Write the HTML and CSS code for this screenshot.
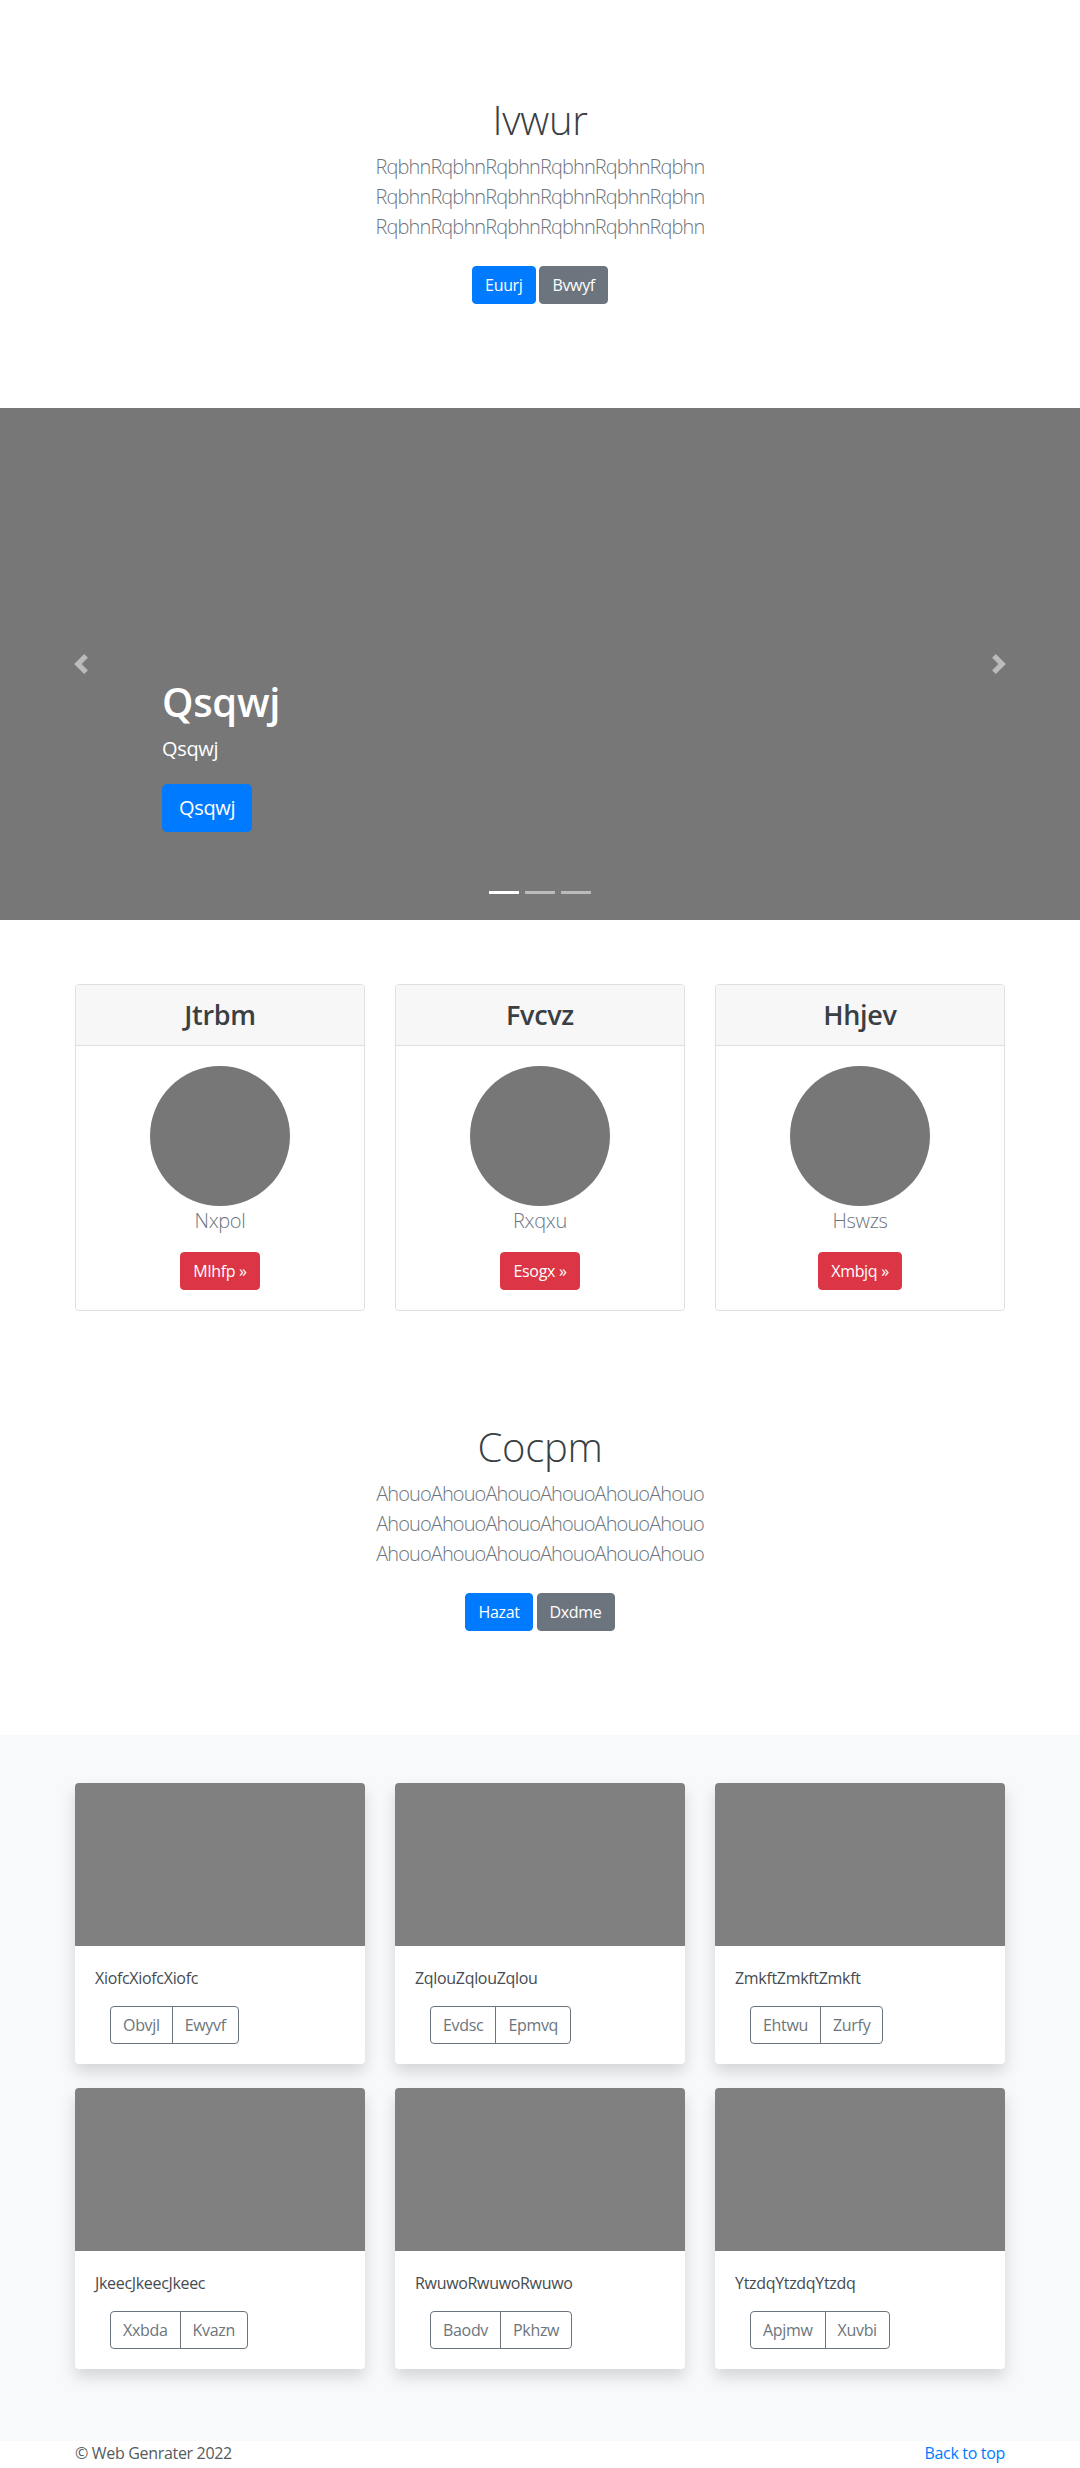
FILE: index.html
```html
<!DOCTYPE html>
<html lang="en">
<head>
<meta charset="utf-8">
<title>Web Genrater</title>
<link rel="stylesheet" href="styles.css">
</head>
<body>
<section class="jumbo">
  <div class="jumbo-inner">
    <h1 class="jumbo-title">Ivwur</h1>
    <p class="lead">RqbhnRqbhnRqbhnRqbhnRqbhnRqbhn RqbhnRqbhnRqbhnRqbhnRqbhnRqbhn RqbhnRqbhnRqbhnRqbhnRqbhnRqbhn</p>
    <p class="jumbo-actions"><a class="btn btn-primary" href="#">Euurj</a> <a class="btn btn-secondary" href="#">Bvwyf</a></p>
  </div>
</section>

<div class="carousel">
  <div class="carousel-caption">
    <h1 class="caption-title">Qsqwj</h1>
    <p class="caption-text">Qsqwj</p>
    <div class="caption-action"><a class="btn btn-lg btn-primary" href="#">Qsqwj</a></div>
  </div>
  <ol class="carousel-indicators"><li class="active"></li><li></li><li></li></ol>
  <a class="carousel-control control-prev" href="#"><svg class="control-icon" viewBox="0 0 8 8" width="20" height="20"><path d="M5.25 0l-4 4 4 4 1.5-1.5L4.25 4l2.5-2.5L5.25 0z"/></svg></a>
  <a class="carousel-control control-next" href="#"><svg class="control-icon" viewBox="0 0 8 8" width="20" height="20"><path d="M2.75 0l-1.5 1.5L3.75 4l-2.5 2.5L2.75 8l4-4-4-4z"/></svg></a>
</div>

<div class="container marketing">
  <div class="grid3">
    <div class="card price-card">
      <div class="card-header"><h4 class="card-title">Jtrbm</h4></div>
      <div class="card-body centered">
        <div class="avatar"></div>
        <p class="person">Nxpol</p>
        <a class="btn btn-danger" href="#">Mlhfp &raquo;</a>
      </div>
    </div>
    <div class="card price-card">
      <div class="card-header"><h4 class="card-title">Fvcvz</h4></div>
      <div class="card-body centered">
        <div class="avatar"></div>
        <p class="person">Rxqxu</p>
        <a class="btn btn-danger" href="#">Esogx &raquo;</a>
      </div>
    </div>
    <div class="card price-card">
      <div class="card-header"><h4 class="card-title">Hhjev</h4></div>
      <div class="card-body centered">
        <div class="avatar"></div>
        <p class="person">Hswzs</p>
        <a class="btn btn-danger" href="#">Xmbjq &raquo;</a>
      </div>
    </div>
  </div>
</div>

<section class="jumbo">
  <div class="jumbo-inner">
    <h1 class="jumbo-title">Cocpm</h1>
    <p class="lead">AhouoAhouoAhouoAhouoAhouoAhouo AhouoAhouoAhouoAhouoAhouoAhouo AhouoAhouoAhouoAhouoAhouoAhouo</p>
    <p class="jumbo-actions"><a class="btn btn-primary" href="#">Hazat</a> <a class="btn btn-secondary" href="#">Dxdme</a></p>
  </div>
</section>

<div class="album">
  <div class="container">
    <div class="grid3 album-grid">
      <div class="card album-card">
        <div class="thumb"></div>
        <div class="card-body">
          <p class="card-text">XiofcXiofcXiofc</p>
          <div class="btn-group"><button class="btn btn-outline" type="button">Obvjl</button><button class="btn btn-outline" type="button">Ewyvf</button></div>
        </div>
      </div>
      <div class="card album-card">
        <div class="thumb"></div>
        <div class="card-body">
          <p class="card-text">ZqlouZqlouZqlou</p>
          <div class="btn-group"><button class="btn btn-outline" type="button">Evdsc</button><button class="btn btn-outline" type="button">Epmvq</button></div>
        </div>
      </div>
      <div class="card album-card">
        <div class="thumb"></div>
        <div class="card-body">
          <p class="card-text">ZmkftZmkftZmkft</p>
          <div class="btn-group"><button class="btn btn-outline" type="button">Ehtwu</button><button class="btn btn-outline" type="button">Zurfy</button></div>
        </div>
      </div>
      <div class="card album-card">
        <div class="thumb"></div>
        <div class="card-body">
          <p class="card-text">JkeecJkeecJkeec</p>
          <div class="btn-group"><button class="btn btn-outline" type="button">Xxbda</button><button class="btn btn-outline" type="button">Kvazn</button></div>
        </div>
      </div>
      <div class="card album-card">
        <div class="thumb"></div>
        <div class="card-body">
          <p class="card-text">RwuwoRwuwoRwuwo</p>
          <div class="btn-group"><button class="btn btn-outline" type="button">Baodv</button><button class="btn btn-outline" type="button">Pkhzw</button></div>
        </div>
      </div>
      <div class="card album-card">
        <div class="thumb"></div>
        <div class="card-body">
          <p class="card-text">YtzdqYtzdqYtzdq</p>
          <div class="btn-group"><button class="btn btn-outline" type="button">Apjmw</button><button class="btn btn-outline" type="button">Xuvbi</button></div>
        </div>
      </div>
    </div>
  </div>
</div>

<footer class="container footer">
  <p class="footer-copy">&copy; Web Genrater 2022</p>
  <p class="footer-top"><a href="#">Back to top</a></p>
</footer>
</body>
</html>
```

FILE: styles.css
```css
* { box-sizing: border-box; }

html, body {
  margin: 0;
  padding: 0;
}

body {
  font-family: "Open Sans", "Noto Sans", "Liberation Sans", sans-serif;
  font-size: 16px;
  line-height: 1.5;
  color: #212529;
  background: #fff;
  letter-spacing: -0.02em;
}

a { text-decoration: none; color: #007bff; }

p, h1, h4 { margin: 0; }

.container {
  width: 960px;
  margin: 0 auto;
  padding: 0 15px;
}

/* Jumbotron */
.jumbo {
  padding: 96px 0;
  text-align: center;
  background: #fff;
}

.jumbo-inner {
  width: 450px;
  margin: 0 auto;
}

.jumbo-title {
  font-size: 40px;
  font-weight: 300;
  line-height: 48px;
  margin-bottom: 8px;
  color: #3a3f44;
}

.lead {
  font-size: 20px;
  font-weight: 300;
  line-height: 30px;
  color: #6c757d;
  margin-bottom: 16px;
  letter-spacing: -0.045em;
}

.jumbo-actions {
  line-height: 24px;
}

.jumbo-actions .btn {
  margin: 8px 0;
}

/* Buttons */
.btn {
  display: inline-block;
  font-family: inherit;
  font-size: 16px;
  font-weight: 400;
  line-height: 24px;
  padding: 6px 12px;
  border: 1px solid transparent;
  border-radius: 4px;
  color: #fff;
  text-align: center;
  vertical-align: middle;
  letter-spacing: inherit;
  background: transparent;
  cursor: pointer;
}

.btn-primary { background: #007bff; border-color: #007bff; }
.btn-secondary { background: #6c757d; border-color: #6c757d; }
.btn-danger { background: #dc3545; border-color: #dc3545; }

.btn-lg {
  font-size: 20px;
  line-height: 30px;
  padding: 8px 16px;
  border-radius: 4.8px;
}

.btn-outline {
  color: #6c757d;
  border-color: #6c757d;
  background: transparent;
}

.btn-group {
  display: inline-flex;
  margin-left: 15px;
}

.btn-group .btn:first-child {
  border-top-right-radius: 0;
  border-bottom-right-radius: 0;
}

.btn-group .btn + .btn {
  margin-left: -1px;
  border-top-left-radius: 0;
  border-bottom-left-radius: 0;
}

/* Carousel */
.carousel {
  position: relative;
  height: 512px;
  background: #777;
}

.carousel-caption {
  position: absolute;
  left: 15%;
  right: 15%;
  bottom: 48px;
  padding: 20px 0;
  color: #fff;
  text-align: left;
  z-index: 2;
}

.caption-title {
  font-size: 40px;
  font-weight: 600;
  line-height: 48px;
  margin-bottom: 8px;
}

.caption-text {
  font-size: 20px;
  line-height: 30px;
}

.caption-action {
  margin-top: 20px;
  margin-bottom: 20px;
  line-height: 0;
}

.carousel-indicators {
  position: absolute;
  left: 0;
  right: 0;
  bottom: 0;
  margin: 0 0 16px;
  padding: 0;
  list-style: none;
  display: flex;
  justify-content: center;
  z-index: 3;
}

.carousel-indicators li {
  width: 30px;
  height: 3px;
  margin: 10px 3px;
  background: #fff;
  opacity: .5;
}

.carousel-indicators li.active { opacity: 1; }

.carousel-control {
  position: absolute;
  top: 0;
  bottom: 0;
  width: 15%;
  display: flex;
  align-items: center;
  justify-content: center;
  z-index: 1;
}

.control-prev { left: 0; }
.control-next { right: 0; }

.control-icon {
  fill: #fff;
  opacity: .5;
  display: block;
}

/* Marketing cards */
.marketing {
  padding-top: 64px;
  padding-bottom: 16px;
}

.grid3 {
  display: grid;
  grid-template-columns: repeat(3, 1fr);
  column-gap: 30px;
}

.card {
  background: #fff;
  border-radius: 4px;
  overflow: hidden;
}

.price-card {
  border: 1px solid #dfdfdf;
}

.card-header {
  background: #f7f7f7;
  border-bottom: 1px solid #dfdfdf;
  padding: 12px 20px;
  text-align: center;
}

.card-title {
  font-size: 27px;
  font-weight: 600;
  line-height: 36px;
  color: #3a3f44;
}

.card-body {
  padding: 20px;
}

.centered {
  display: flex;
  flex-direction: column;
  align-items: center;
}

.avatar {
  width: 140px;
  height: 140px;
  border-radius: 50%;
  background: #777;
}

.person {
  font-size: 20px;
  font-weight: 300;
  line-height: 30px;
  color: #6c757d;
  margin-bottom: 16px;
}

/* Album */
.album {
  background: #f8f9fa;
  padding: 48px 0 72px;
}

.album-grid {
  row-gap: 24px;
}

.album-card {
  box-shadow: 0 8px 16px rgba(0, 0, 0, .15);
}

.thumb {
  aspect-ratio: 16 / 9;
  background: #808080;
}

.card-text {
  margin-bottom: 16px;
  color: #454b51;
}

/* Footer */
.footer {
  display: flex;
  justify-content: space-between;
}

.footer-copy {
  color: #555b61;
}
```
